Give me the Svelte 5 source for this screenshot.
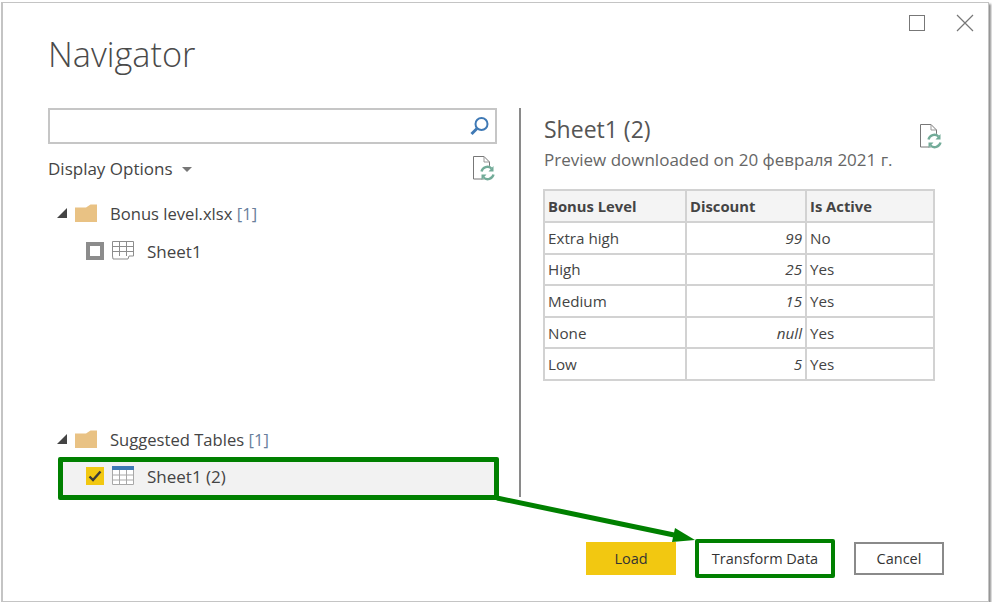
<script>
  const rows = [
    { level: "Extra high", discount: "99", active: "No" },
    { level: "High", discount: "25", active: "Yes" },
    { level: "Medium", discount: "15", active: "Yes" },
    { level: "None", discount: "null", active: "Yes" },
    { level: "Low", discount: "5", active: "Yes" },
  ];
</script>

{#snippet refreshIcon()}
  <svg class="refresh" width="24" height="26" viewBox="0 0 24 26">
    <path d="M1.5 1.5H12L17.5 7V24H1.5Z" fill="#fff" stroke="#777" stroke-width="1" />
    <path d="M12 1.5V7H17.5" fill="none" stroke="#999" stroke-width="1" />
    <circle cx="15.5" cy="18" r="7.5" fill="#fff" />
    <path d="M9.5 16.5A6 6 0 0 1 19.5 13.5M21.5 19.5A6 6 0 0 1 11.5 22.5" fill="none" stroke="#72ab98" stroke-width="2.4" />
    <path d="M21.5 11V16.5H16.5ZM9.5 25V19.5H14.5Z" fill="#72ab98" />
  </svg>
{/snippet}

{#snippet folder()}
  <svg class="folder" width="24" height="20" viewBox="0 0 24 20">
    <path d="M1 4.5H12L16.5 1.5H23V19H1Z" fill="#e9c284" />
  </svg>
{/snippet}

<div class="dialog">
  <div class="window-buttons">
    <span class="maximize"></span>
    <svg width="18" height="18" viewBox="0 0 18 18">
      <path d="M1 1L17 17M17 1L1 17" stroke="#777" stroke-width="1.2" />
    </svg>
  </div>

  <h1>Navigator</h1>

  <div class="columns">
    <section class="left">
      <div class="search">
        <svg width="20" height="20" viewBox="0 0 20 20">
          <circle cx="11.5" cy="8" r="6" fill="none" stroke="#3f79b5" stroke-width="2" />
          <path d="M7 12.5L1.5 18" stroke="#3f79b5" stroke-width="3" />
        </svg>
      </div>
      <div class="options">
        <span>Display Options <i class="caret"></i></span>
        {@render refreshIcon()}
      </div>

      <div class="tree-head first">
        <i class="expander"></i>
        {@render folder()}
        <span>Bonus level.xlsx <em>[1]</em></span>
      </div>
      <div class="tree-item">
        <span class="check"></span>
        <svg class="grid-icon" width="22" height="20" viewBox="0 0 22 20">
          <path d="M.5 .5H21.5V15L17 15L16 18H1L.5 15Z M.5 5.5H21.5M.5 10.5H21.5M7.5 .5V15M14.5 .5V15" fill="none" stroke="#8d8d8d" />
        </svg>
        <span>Sheet1</span>
      </div>

      <div class="tree-head second">
        <i class="expander"></i>
        {@render folder()}
        <span>Suggested Tables <em>[1]</em></span>
      </div>
      <div class="tree-item selected">
        <span class="check on">
          <svg width="14" height="12" viewBox="0 0 14 12">
            <path d="M1.5 6.5L5 10L12.5 1.5" fill="none" stroke="#3a3a3a" stroke-width="2.4" />
          </svg>
        </span>
        <svg class="grid-icon" width="22" height="20" viewBox="0 0 22 20">
          <rect x="0" y="0" width="22" height="4" fill="#3f79b5" />
          <path d="M.5 4V18.5H21.5V4 M.5 9H21.5M.5 14H21.5M7.5 4V18.5M14.5 4V18.5" fill="#fff" stroke="#a8a8a8" />
        </svg>
        <span>Sheet1 (2)</span>
      </div>
    </section>

    <div class="divider"></div>

    <section class="right">
      <div class="preview-head">
        <div>
          <h2>Sheet1 (2)</h2>
          <p>Preview downloaded on 20 февраля 2021 г.</p>
        </div>
        {@render refreshIcon()}
      </div>
      <table>
        <thead>
          <tr>
            <th class="c1">Bonus Level</th>
            <th class="c2">Discount</th>
            <th class="c3">Is Active</th>
          </tr>
        </thead>
        <tbody>
          {#each rows as row}
            <tr>
              <td>{row.level}</td>
              <td class="num">{row.discount}</td>
              <td>{row.active}</td>
            </tr>
          {/each}
        </tbody>
      </table>
    </section>
  </div>

  <div class="footer">
    <button class="load">Load</button>
    <button class="transform">Transform Data</button>
    <button class="cancel">Cancel</button>
  </div>

  <svg class="arrow" width="220" height="60" viewBox="0 0 220 60">
    <path d="M1 3L178 40" stroke="#008000" stroke-width="5" />
    <path d="M179 33L199 45L176 47Z" fill="#008000" />
  </svg>
</div>

<style>
  :global(body) {
    background: #fff;
  }

  .dialog {
    position: relative;
    box-sizing: border-box;
    width: 987px;
    height: 600px;
    margin: 2px 0 0 2px;
    background: #fff;
    border: 1px solid #c4c4c4;
    box-shadow: 2px 2px 2px #8f8f8f, -1px 0 0 #c4c4c4;
    font-family: "Open Sans", "Noto Sans", sans-serif;
    font-size: 16.6px;
    color: #444;
  }

  .window-buttons {
    display: flex;
    justify-content: flex-end;
    align-items: center;
    gap: 31px;
    height: 18px;
    padding: 11px 14px 0 0;
  }

  .maximize {
    box-sizing: border-box;
    width: 16px;
    height: 16px;
    border: 1.5px solid #777;
  }

  h1 {
    margin: -1px 0 0 45px;
    height: 58px;
    font-size: 34.3px;
    line-height: 46px;
    font-weight: 300;
    color: #4a4a4a;
  }

  .columns {
    display: flex;
    height: 389px;
    margin-top: 19px;
  }

  .left {
    width: 449px;
    margin-left: 45px;
  }

  .search {
    box-sizing: border-box;
    height: 36px;
    border: 2.5px solid #c6c6c6;
    display: flex;
    justify-content: flex-end;
    align-items: center;
    padding-right: 5px;
  }

  .options {
    display: flex;
    justify-content: space-between;
    align-items: center;
    height: 26px;
    margin-top: 11px;
    padding-right: 1px;
    font-size: 17px;
  }

  .caret {
    display: inline-block;
    width: 0;
    height: 0;
    margin-left: 5px;
    vertical-align: 3px;
    border-left: 5px solid transparent;
    border-right: 5px solid transparent;
    border-top: 5px solid #777;
  }

  .tree-head {
    display: flex;
    align-items: center;
    height: 24px;
    padding-left: 9px;
  }

  .tree-head.first {
    margin-top: 20px;
  }

  .tree-head.second {
    margin-top: 164px;
  }

  .tree-head em {
    font-style: normal;
    color: #6a7f9c;
  }

  .expander {
    width: 0;
    height: 0;
    margin-right: 7px;
    border-bottom: 10px solid #444;
    border-left: 10px solid transparent;
  }

  .folder {
    margin-right: 12px;
  }

  .tree-item {
    display: flex;
    align-items: center;
    height: 24px;
    margin-top: 14px;
    padding-left: 38px;
    font-size: 17px;
  }

  .tree-item.selected {
    box-sizing: border-box;
    height: 43px;
    margin: 6px 0 0 10px;
    width: 441px;
    padding: 0 0 5px 23px;
    background: #f2f2f2;
    border: 5px solid #008000;
    border-radius: 2px;
  }

  .check {
    box-sizing: border-box;
    display: flex;
    align-items: center;
    justify-content: center;
    width: 18px;
    height: 18px;
    margin-right: 8px;
    border: 4px solid #8c8c8c;
    background: #fff;
  }

  .check.on {
    border: 0;
    background: #f2c811;
  }

  .grid-icon {
    margin-right: 13px;
  }

  .divider {
    width: 2px;
    margin-left: 22px;
    background: #8a8a8a;
  }

  .right {
    margin-left: 22px;
    width: 400px;
  }

  .preview-head {
    display: flex;
    justify-content: space-between;
    align-items: flex-start;
    height: 81px;
  }

  .preview-head .refresh {
    margin-top: 15px;
  }

  h2 {
    margin: 5px 0 0 1px;
    font-size: 23px;
    line-height: 32px;
    font-weight: 400;
    color: #555;
  }

  p {
    margin: 4px 0 0 1px;
    font-size: 17px;
    line-height: 22px;
    color: #666;
  }

  table {
    border-collapse: collapse;
    table-layout: fixed;
    width: 392px;
    font-size: 15.2px;
    border: 2px solid #d2d2d2;
  }

  th,
  td {
    box-sizing: border-box;
    height: 31.6px;
    padding: 0 3px;
    border: 2px solid #d2d2d2;
    text-align: left;
    font-weight: 400;
  }

  th {
    height: 32px;
    background: #f4f4f4;
    font-size: 14.8px;
    font-weight: 700;
  }

  .c1 {
    width: 142px;
  }

  .c2 {
    width: 120px;
  }

  .num {
    text-align: right;
    font-style: italic;
  }

  .footer {
    display: flex;
    justify-content: flex-end;
    align-items: center;
    gap: 19px;
    margin-top: 42px;
    padding-right: 44px;
  }

  button {
    box-sizing: border-box;
    height: 33px;
    padding: 0;
    background: #fff;
    font: inherit;
    font-size: 14.5px;
    color: #333;
    border: 2px solid #8a8a8a;
  }

  .load {
    width: 90px;
    background: #f2c811;
    border: 0;
  }

  .transform {
    width: 140px;
    height: 39px;
    border: 4px solid #008000;
    border-radius: 2px;
  }

  .cancel {
    width: 90px;
  }

  .arrow {
    position: absolute;
    left: 493px;
    top: 492px;
  }
</style>
